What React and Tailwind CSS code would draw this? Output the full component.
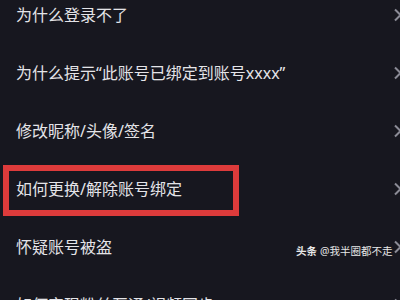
const items = [
  '为什么登录不了',
  '为什么提示“此账号已绑定到账号xxxx”',
  '修改昵称/头像/签名',
  '如何更换/解除账号绑定',
  '怀疑账号被盗',
  '如何实现粉丝互通/视频同步',
]

function Chevron() {
  return (
    <svg width="10" height="14" viewBox="0 0 10 14" className="shrink-0">
      <path d="M2 1.5 L7.5 7 L2 12.5" fill="none" stroke="#8b8b96" strokeWidth="2" />
    </svg>
  )
}

export default function App() {
  return (
    <div
      className="relative w-[400px] h-[300px] overflow-hidden bg-[#17171f]"
      style={{ fontFamily: '"Noto Sans", "Noto Sans CJK SC", sans-serif' }}
    >
      <div className="-mt-[14px] flex flex-col">
        {items.map((text, i) => (
          <div key={i} className="relative h-[58px] flex items-center justify-between pl-4 pr-0">
            <span className="text-[16px] text-[#e4e4e8] leading-none whitespace-nowrap">{text}</span>
            <span className="-mr-[3px]">
              <Chevron />
            </span>
            {i === 3 && (
              <div className="absolute left-[3px] top-[5px] w-[236px] h-[51px] border-[6px] border-[#dd3b3b]" />
            )}
          </div>
        ))}
      </div>
      <div className="absolute left-[296px] top-[246px] text-[10.5px] text-[#e8e8e8] leading-none flex gap-[3px] whitespace-nowrap">
        <span className="font-bold">头条</span>
        <span>@我半圈都不走</span>
      </div>
    </div>
  )
}
